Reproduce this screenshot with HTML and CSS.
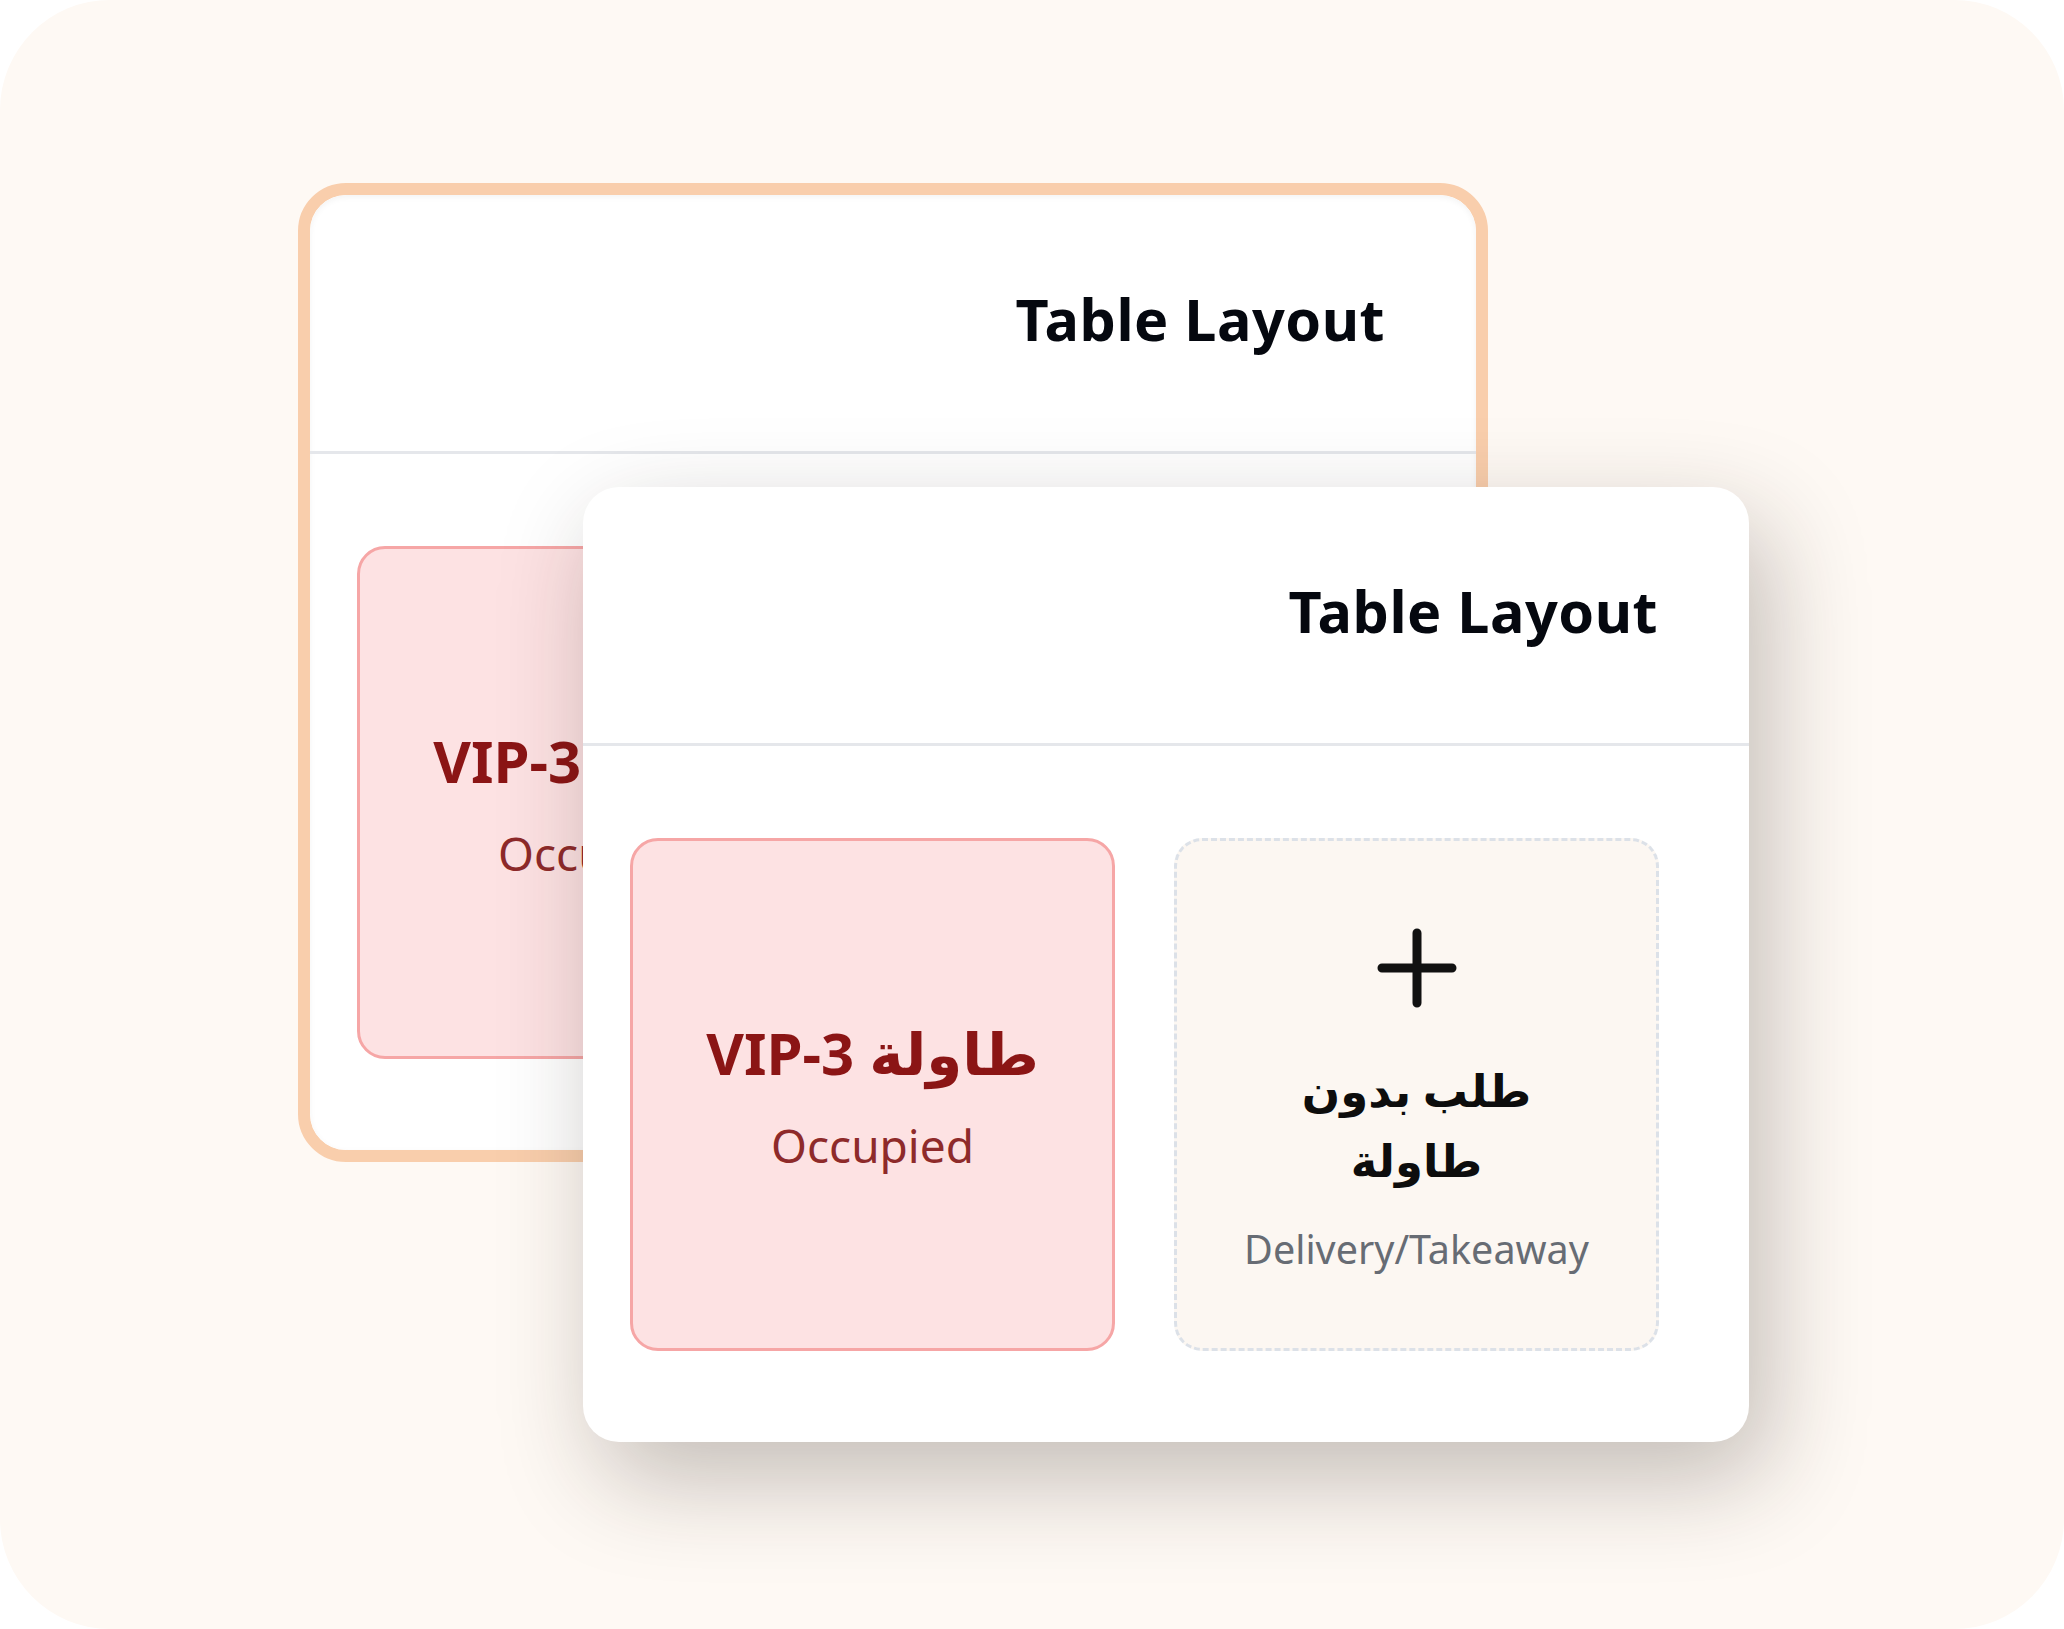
FILE: index.html
```html
<!DOCTYPE html>
<html lang="ar">
<head>
<meta charset="utf-8">
<title>Table Layout</title>
<link rel="stylesheet" href="styles.css">
</head>
<body>
<div class="canvas">
  <div class="stack">
    <div class="frame">
      <section class="card" dir="rtl">
        <header class="card-head"><h2 class="card-title">Table Layout</h2></header>
        <div class="card-body">
          <div class="tile tile--takeaway">
            <svg class="takeaway-icon" viewBox="0 0 80 80" aria-hidden="true"><path d="M40 5V75M5 40H75" fill="none" stroke="#111" stroke-width="9" stroke-linecap="round"/></svg>
            <div class="takeaway-label">طلب بدون طاولة</div>
            <div class="takeaway-sub">Delivery/Takeaway</div>
          </div>
          <div class="tile tile--occupied">
            <div class="tile-name">طاولة VIP-3</div>
            <div class="tile-status">Occupied</div>
          </div>
        </div>
      </section>
    </div>
    <section class="card card--front" dir="rtl">
      <header class="card-head"><h2 class="card-title">Table Layout</h2></header>
      <div class="card-body">
        <div class="tile tile--takeaway">
          <svg class="takeaway-icon" viewBox="0 0 80 80" aria-hidden="true"><path d="M40 5V75M5 40H75" fill="none" stroke="#111" stroke-width="9" stroke-linecap="round"/></svg>
          <div class="takeaway-label">طلب بدون طاولة</div>
          <div class="takeaway-sub">Delivery/Takeaway</div>
        </div>
        <div class="tile tile--occupied">
          <div class="tile-name">طاولة VIP-3</div>
          <div class="tile-status">Occupied</div>
        </div>
      </div>
    </section>
  </div>
</div>
</body>
</html>
```
FILE: styles.css
```css
html, body {
  margin: 0;
  padding: 0;
  background: #ffffff;
}

body {
  font-family: "Noto Sans", "DejaVu Sans", sans-serif;
}

.canvas {
  width: 2064px;
  height: 1629px;
  box-sizing: border-box;
  padding: 183px 0 0 298px;
  background: #fef9f4;
  border-radius: 110px;
  overflow: hidden;
}

.stack {
  position: relative;
  width: 1190px;
}

.frame {
  width: 1166px;
  border: 12px solid #f9ceac;
  border-radius: 48px;
  background: #ffffff;
  overflow: hidden;
}

.card {
  width: 1166px;
  height: 955px;
  box-sizing: border-box;
  background: #ffffff;
  border-radius: 36px;
  display: flex;
  flex-direction: column;
  box-shadow: inset 0 2px 6px rgba(0, 0, 0, 0.05);
}

.card--front {
  position: absolute;
  left: 285px;
  top: 304px;
  box-shadow: 18px 36px 100px rgba(40, 30, 20, 0.28);
}

.card-head {
  height: 259px;
  box-sizing: border-box;
  border-bottom: 3px solid #e5e7eb;
  display: flex;
  align-items: center;
  padding: 0 91px 8px 91px;
}

.card-title {
  margin: 0;
  font-size: 57.5px;
  font-weight: 700;
  line-height: 76px;
  color: #05080f;
  letter-spacing: 0.5px;
}

.card-body {
  display: grid;
  grid-template-columns: 485px 485px;
  column-gap: 59px;
  padding: 92px 90px 0 47px;
}

.tile {
  height: 513px;
  box-sizing: border-box;
  border-radius: 28px;
  display: flex;
  flex-direction: column;
  align-items: center;
  justify-content: center;
  text-align: center;
}

.tile--occupied {
  background: #fde2e3;
  border: 3px solid #f6a6a6;
}

.tile--takeaway {
  background: #fcf7f2;
  border: 3px dashed #dce1e8;
  padding-top: 12px;
}

.tile-name {
  font-size: 58px;
  font-weight: 700;
  line-height: 76px;
  color: #8b1515;
}

.tile-status {
  margin-top: 24px;
  font-size: 46px;
  line-height: 60px;
  color: #8e2a2a;
}

.takeaway-icon {
  display: block;
  width: 80px;
  height: 80px;
}

.takeaway-label {
  margin-top: 47px;
  max-width: 300px;
  font-size: 45px;
  font-weight: 700;
  line-height: 70px;
  color: #0d0d0d;
}

.takeaway-sub {
  margin-top: 29px;
  font-size: 39.5px;
  line-height: 50px;
  color: #676c74;
}
```
